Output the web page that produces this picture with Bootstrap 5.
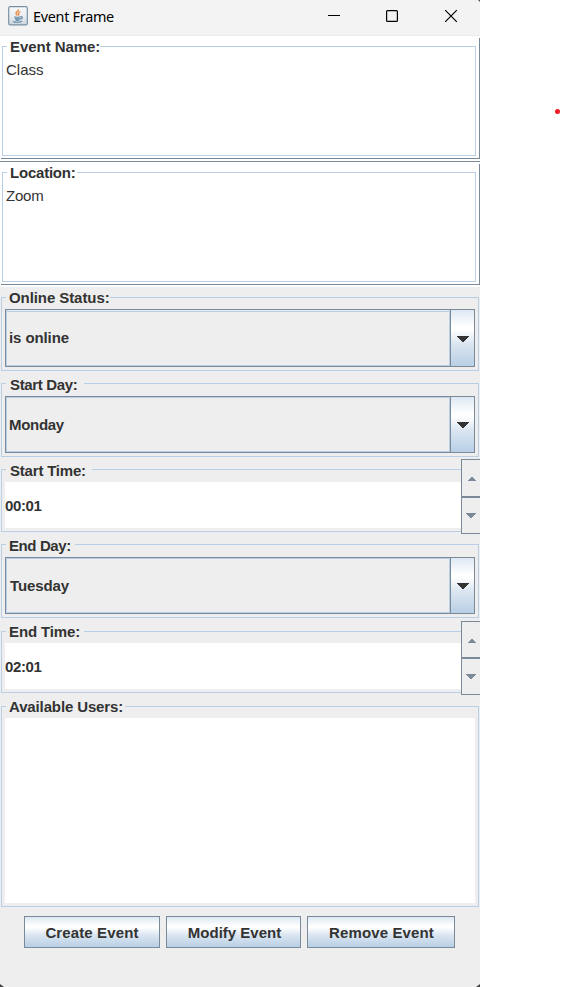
<!DOCTYPE html>
<html lang="en">
<head>
<meta charset="utf-8">
<title>Event Frame</title>
<link href="https://cdn.jsdelivr.net/npm/bootstrap@5.3.0/dist/css/bootstrap.min.css" rel="stylesheet">
<style>
body{background:#fff;height:987px;overflow:hidden;font-family:"Liberation Sans",Arial,sans-serif;font-size:15px;color:#333;line-height:17px}
svg{display:block}
.frame{width:480px;height:987px;background:#eee}
.titlebar{height:36px;background:#f3f3f3;border-bottom:1px solid #ebebeb;color:#000}
.caption{font:14.4px/20px "Noto Sans","Open Sans",sans-serif;letter-spacing:-.28px;margin:-2px 0 0 5px}
.java{margin:-3px 0 0 8px}
.area{background:#fff;padding:2px 4px 2px 2px}
.area-name{height:125px;background:linear-gradient(#7a8a99,#7a8a99) 1px 122px/479px 1px no-repeat,linear-gradient(#7a8a99,#7a8a99) 479px 2px/1px 121px no-repeat,#fff}
.area-place{height:126px;background:linear-gradient(#7a8a99,#7a8a99) 0 0/480px 1px no-repeat,linear-gradient(#7a8a99,#7a8a99) 1px 123px/479px 1px no-repeat,linear-gradient(#7a8a99,#7a8a99) 479px 3px/1px 121px no-repeat,#fff;padding-top:3px}
.group{border:1px solid #b8cfe5;padding:0 3px;width:478px;margin-left:1px}
.area .group{width:474px;height:118px;margin:0}
.group legend{float:none;margin:0 0 0 1px;padding:0 0 0 3px;font-size:15px;font-weight:700;line-height:17px;height:17px;white-space:nowrap;width:var(--w);letter-spacing:var(--ls,0)}
.group legend.low{line-height:19px}
.group legend.in{padding-left:4px}
.value{padding-top:6px;font-size:15px}
.h82{height:82px}
.combo{width:470px;height:57px;border:1px solid #7a8a99;margin-top:4px;font-weight:700}
.combo-tall{height:58px;margin-top:3px}
.combo-text{border:1px solid #b8cfe5;padding-left:2px}
.combo-tall .combo-text{border-top:0;box-shadow:inset 0 1px #eee,inset 0 2px #b8cfe5,inset 0 -1px #eee}
.combo-btn{width:24px;border-left:1px solid #7a8a99;padding-right:1px;background:linear-gradient(#dde8f3,#fff 30%,#fff 35%,#dbe6f1 60%,#b8cfe5)}
.combo-tall .combo-btn{padding-top:2px}
.spinrow .group{width:460px;border-right:0;padding-right:0}
.field{background:#fff;height:46px;margin-top:4px;font-weight:700;letter-spacing:-.4px}
.spin{width:19px;height:75px;margin-top:-2px;border:1px solid #7a8a99;border-right:0}
.spin div{height:35px;padding-bottom:1px}
.spin div:first-child{height:38px;border-bottom:2px solid #7a8a99;padding:2px 0 0}
.spin-short div:first-child{height:37px}
.spin-short div{height:35px}
.users{height:185px;background:#fff;margin-top:3px}
.actions{margin-top:9px;padding-left:24px}
.metal{height:32px;border:1px solid #7a8a99;border-radius:0;padding:0;font-size:15px;line-height:17px;font-weight:700;color:#333;background:linear-gradient(#dde8f3,#fff 30%,#fff 35%,#dbe6f1 60%,#b8cfe5);letter-spacing:.12px}
.dot{width:5px;height:5px;border-radius:50%;background:#ed1c24;margin:109px 0 0 75px}
.corner{height:3px;margin-top:36px}
</style>
</head>
<body>
<div class="d-flex">
<main class="frame flex-shrink-0">
  <header class="titlebar d-flex align-items-center">
    <svg class="java" width="20" height="20" viewBox="0 0 20 20"><defs><linearGradient id="jb" x2="0" y2="1"><stop stop-color="#f7f8f9"/><stop offset=".55" stop-color="#e9edf0"/><stop offset="1" stop-color="#cbd5dd"/></linearGradient></defs><rect x=".7" y=".7" width="18.6" height="18.2" rx="1.5" fill="url(#jb)" stroke="#7892a5" stroke-width="1.2"/><path d="M10.3 3.4C11 5 7.4 6.1 8 7.7c.3.7 1.1 1.1 1.3 1.8M12.3 5.6c-1.8.8-2.6 1.5-1.8 2.4.6.7.2 1.1-.3 1.5" fill="none" stroke="#ee8c45" stroke-width="1.4"/><path d="M6.3 10.7c2 .7 4.6.7 6.2 0M6.8 12.4c1.8.7 3.8.6 5.4.1M7.5 14c1.6.5 2.8.5 4 0M5 15.4c2.6 1.2 7 1 9-.2M12.6 10.7c2.6-.4 2.3 2-.3 2.4" fill="none" stroke="#5b86a5" stroke-width="1.1"/></svg>
    <span class="caption">Event Frame</span>
    <svg class="ms-auto" width="152" height="35" viewBox="0 0 152 35" fill="none" stroke="#000"><path d="M0 15.5h12"/><rect x="58.6" y="10.6" width="10.8" height="10.8" rx="1" stroke-width="1.2"/><path d="M117.2 10.2l11.6 11.6M128.8 10.2L117.2 21.8" stroke-width="1.2"/><path d="M150 0h2v2z" fill="#555" stroke="none"/></svg>
  </header>

  <section class="area area-name">
    <fieldset class="group" style="--w:93px;--ls:-.05px"><legend>Event Name:</legend><div class="value">Class</div></fieldset>
  </section>
  <section class="area area-place">
    <fieldset class="group" style="--w:70px;--ls:-.22px"><legend>Location:</legend><div class="value" style="letter-spacing:-.2px">Zoom</div></fieldset>
  </section>

  <fieldset class="group h82" style="--w:104px;--ls:-.08px;margin-top:2px"><legend>Online Status:</legend>
    <div class="combo combo-tall d-flex"><div class="combo-text flex-grow-1 d-flex align-items-center" style="letter-spacing:-.1px">is online</div><div class="combo-btn d-flex align-items-center justify-content-center"><svg width="13" height="6" shape-rendering="crispEdges"><path d="M0 0h13L7 6H6z" fill="#333"/></svg></div></div>
  </fieldset>
  <fieldset class="group h82" style="--w:78px;--ls:-.35px;margin-top:4px"><legend class="low in">Start Day:</legend>
    <div class="combo d-flex"><div class="combo-text flex-grow-1 d-flex align-items-center" style="letter-spacing:-.3px">Monday</div><div class="combo-btn d-flex align-items-center justify-content-center"><svg width="13" height="6" shape-rendering="crispEdges"><path d="M0 0h13L7 6H6z" fill="#333"/></svg></div></div>
  </fieldset>
  <div class="spinrow d-flex align-items-start" style="margin-top:4px">
    <fieldset class="group" style="--w:86px;--ls:-.2px;height:71px"><legend class="low in">Start Time:</legend><div class="field d-flex align-items-center">00:01</div></fieldset>
    <div class="spin"><div class="d-flex align-items-center justify-content-center"><svg width="9" height="4" shape-rendering="crispEdges"><path d="M0 4h9L5 0H4z" fill="#7a8a99"/></svg></div><div class="d-flex align-items-center justify-content-center"><svg width="10" height="5" shape-rendering="crispEdges"><path d="M0 0h10L5.5 5h-1z" fill="#7a8a99"/></svg></div></div>
  </div>
  <fieldset class="group h82" style="--w:69px;--ls:-.4px;margin-top:2px"><legend class="low">End Day:</legend>
    <div class="combo d-flex"><div class="combo-text flex-grow-1 d-flex align-items-center" style="padding-left:3px;letter-spacing:-.1px">Tuesday</div><div class="combo-btn d-flex align-items-center justify-content-center"><svg width="13" height="6" shape-rendering="crispEdges"><path d="M0 0h13L7 6H6z" fill="#333"/></svg></div></div>
  </fieldset>
  <div class="spinrow d-flex align-items-start" style="margin-top:5px">
    <fieldset class="group" style="--w:78px;--ls:-.12px;height:70px"><legend>End Time:</legend><div class="field d-flex align-items-center" style="margin-top:3px">02:01</div></fieldset>
    <div class="spin spin-short" style="height:74px"><div class="d-flex align-items-center justify-content-center"><svg width="9" height="4" shape-rendering="crispEdges"><path d="M0 4h9L5 0H4z" fill="#7a8a99"/></svg></div><div class="d-flex align-items-center justify-content-center"><svg width="10" height="5" shape-rendering="crispEdges"><path d="M0 0h10L5.5 5h-1z" fill="#7a8a99"/></svg></div></div>
  </div>
  <fieldset class="group" style="--w:119px;--ls:-.13px;height:209px;margin-top:3px"><legend>Available Users:</legend><div class="users"></div></fieldset>

  <div class="actions d-flex">
    <button class="btn metal" style="width:136px">Create Event</button>
    <button class="btn metal" style="width:135px;margin-left:6px;padding-left:2px;letter-spacing:0">Modify Event</button>
    <button class="btn metal" style="width:148px;margin-left:6px;padding-left:1px">Remove Event</button>
  </div>
  <div class="corner d-flex justify-content-between"><svg width="4" height="3"><path d="M0 0l4 3H0z" fill="#444"/></svg><svg width="4" height="3"><path d="M4 0L0 3h4z" fill="#444"/></svg></div>
</main>
<div class="dot"></div>
</div>
<script src="https://cdn.jsdelivr.net/npm/bootstrap@5.3.0/dist/js/bootstrap.bundle.min.js"></script>
</body>
</html>
